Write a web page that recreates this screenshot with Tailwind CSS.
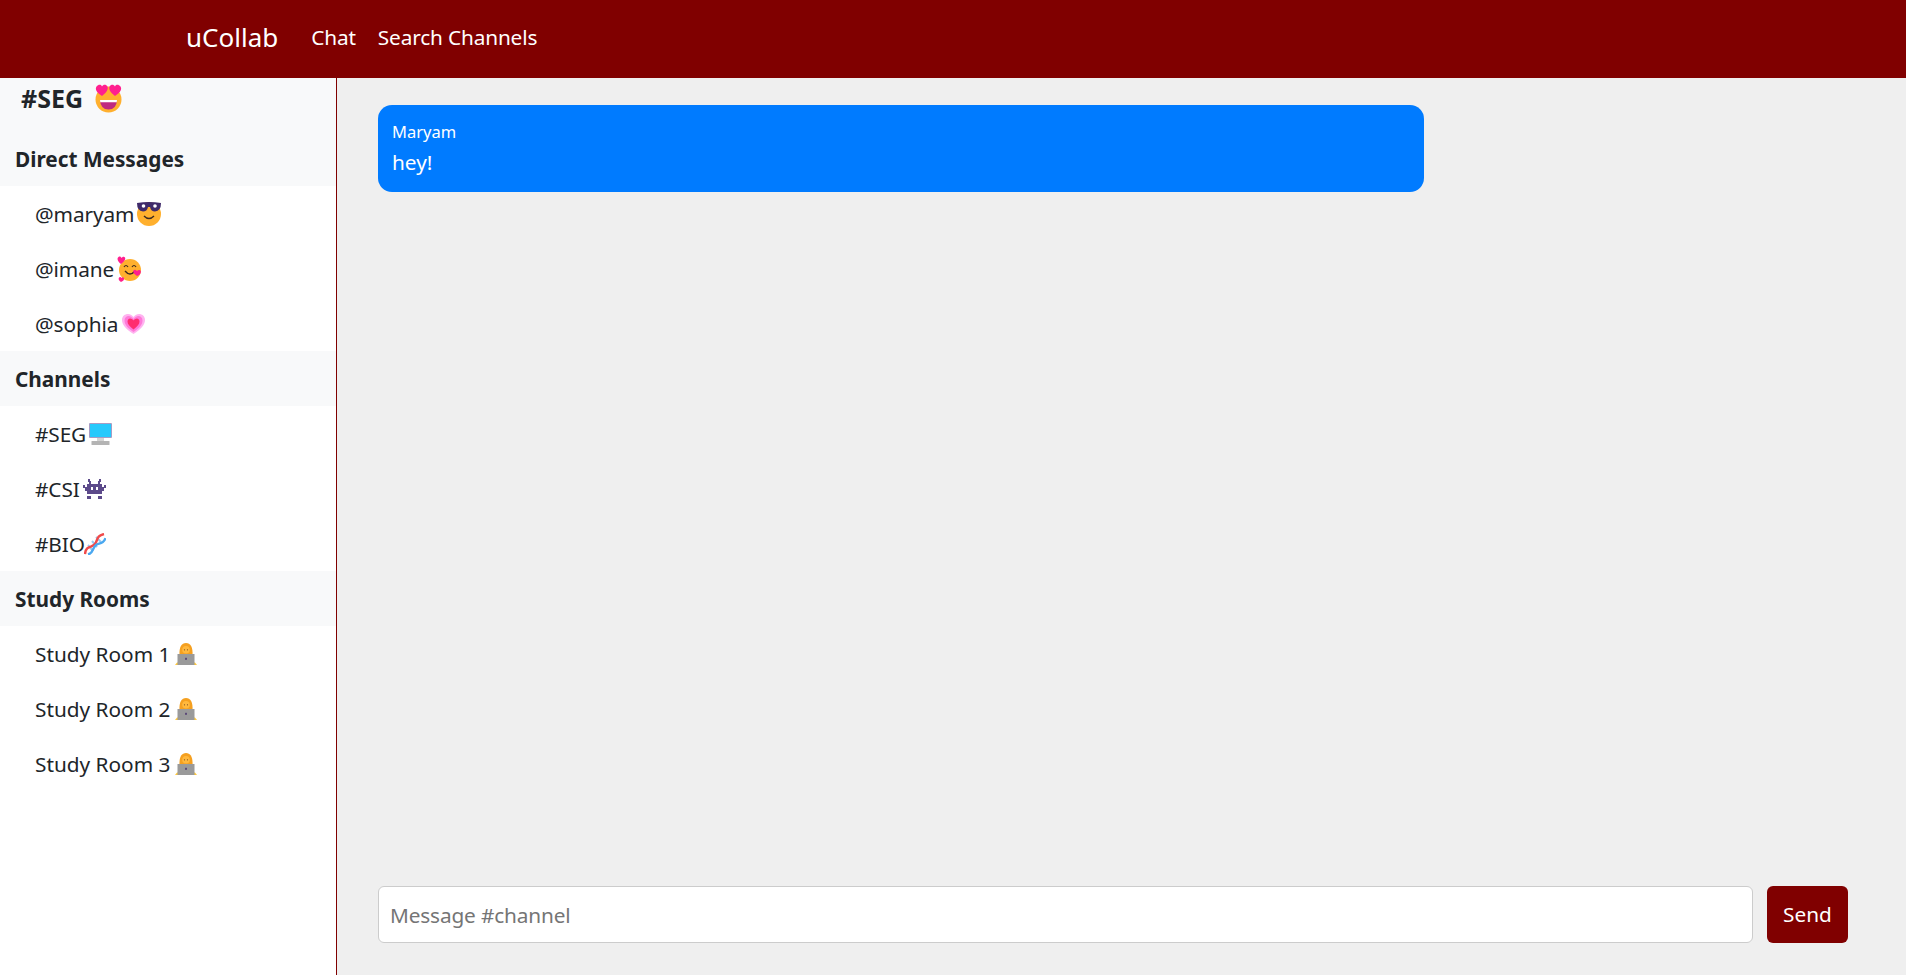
<!DOCTYPE html>
<html lang="en">
<head>
    <meta charset="UTF-8">
    <meta name="viewport" content="width=device-width, initial-scale=1.0">
    <title>uCollab</title>
    <script src="https://cdn.jsdelivr.net/npm/@tailwindcss/browser@4"></script>
</head>
<body class="h-[975px] overflow-hidden bg-[#efefef] text-[#212529] font-['Noto_Sans','Open_Sans',sans-serif]">

    <!-- Shared emoji drawings -->
    <svg class="hidden">
        <symbol id="woman-laptop" viewBox="0 0 22 22">
            <path d="M4.500 12 C4 4 6.500 0 11 0 C15.500 0 18 4 17.500 12 Z" fill="#f5a020"/>
            <circle cx="11" cy="6.800" r="3.800" fill="#ffb83d"/>
            <circle cx="9.500" cy="6.800" r=".6" fill="#7a4a20"/>
            <circle cx="12.500" cy="6.800" r=".6" fill="#7a4a20"/>
            <path d="M0 22 L2 19.500 H3 V22 Z M22 22 L20 19.500 H19 V22 Z" fill="#ffc83d"/>
            <rect x="2.500" y="11" width="17" height="11" fill="#9a9a9a"/>
            <rect x="10" y="14.800" width="2" height="2" fill="#5c4a78"/>
        </symbol>
    </svg>

    <!-- Navigation Bar -->
    <header class="h-[78px] bg-[#800000] text-white flex items-center pl-[186px] pb-[4px]">
        <a href="#" class="text-[26px] leading-none mr-[33px]">uCollab</a>
        <nav class="flex items-center gap-[22px] text-[20.8px] leading-none tracking-[-0.15px]">
            <a href="#">Chat</a>
            <a href="#">Search Channels</a>
        </nav>
    </header>

    <div class="flex h-[897px]">
        <!-- Sidebar -->
        <aside class="w-[337px] shrink-0 bg-white border-r border-[#800000]">
            <div class="bg-[#f8f9fa] h-[53px]">
                <div class="flex items-center h-[41px] pl-[21px] text-[25px] font-bold">
                    #SEG
                    <svg class="ml-[12px] -mt-[1px] w-[27px] h-[29px]" viewBox="0 0 27 29">
                        <circle cx="13.500" cy="15.500" r="13" fill="#ffb02e"/>
                        <path d="M5 16 H22 Q21.500 25.500 13.500 25.500 Q5.500 25.500 5 16 Z" fill="#bf2a80"/>
                        <path d="M5 16 H22 L21.700 18.200 H5.300 Z" fill="#fff"/>
                        <path d="M7 12 C1 8 0 5 1.500 2.500 C3.500 0 6.500 .5 7 2.500 C8 .5 11 0 12.500 2.500 C13.500 5 12 8 7 12 Z" fill="#ff1f8f"/>
                        <path d="M20 12 C15 8 13.500 5 14.500 2.500 C16 0 19 .5 20 2.500 C20.500 .5 23.500 0 25.500 2.500 C27 5 26 8 20 12 Z" fill="#ff1f8f"/>
                    </svg>
                </div>
            </div>
            <h2 class="flex items-center h-[55px] pl-[15px] pt-[2px] bg-[#f8f9fa] text-[20.8px] font-bold">Direct Messages</h2>

            <ul class="rounded-[5px] bg-white">
                <li class="flex items-center h-[55px] pl-[35px] pt-[2px] text-[20.8px] tracking-[-0.1px]">
                    @maryam
                    <svg class="ml-[3px] -mt-[3px] w-[24px] h-[25px]" viewBox="0 0 24 25">
                        <circle cx="12" cy="13" r="12" fill="#ffb02e"/>
                        <path d="M0 2 Q12 0 24 2 Q24 10 18 10.500 Q14 10.500 13 6 H11 Q10 10.500 6 10.500 Q0 10 0 2 Z" fill="#3f2a6a"/>
                        <circle cx="6.500" cy="5" r="1.800" fill="#fff"/>
                        <circle cx="18" cy="5" r="1.800" fill="#fff"/>
                        <path d="M7 15 Q12 20 17 15" fill="none" stroke="#3c2a20" stroke-width="1.400"/>
                    </svg>
                </li>
                <li class="flex items-center h-[55px] pl-[35px] pt-[2px] text-[20.8px] tracking-[-0.1px]">
                    @imane
                    <svg class="ml-[3px] -mt-[2px] w-[24px] h-[26px]" viewBox="0 0 24 26">
                        <circle cx="13" cy="14" r="11" fill="#ffb02e"/>
                        <path d="M7 11 Q9 8 11 11 M15 11 Q17 8 19 11" fill="none" stroke="#3c2a20" stroke-width="1.200"/>
                        <path d="M8 15 Q13 21 18 15" fill="none" stroke="#3c2a20" stroke-width="1.300"/>
                        <path d="M4 8 C0 5 0 2 1.500 1 C3 0 4 1 4.500 2 C5 1 7 0 8 1.500 C9 3 7 6 4 8 Z" fill="#ff1f8f"/>
                        <path d="M20 20 C17 18 15.500 16 16.500 14.500 C17.500 13 19 14 20 15 C21 14 23 13.500 23.800 15 C24.200 17 23 19 20 20 Z" fill="#ff1f8f"/>
                        <path d="M4 26 C2 25 1 23 2 21.500 C3 20.500 4 21 4.500 22 C5 21 6.500 21 7 22 C7.500 24 6 25 4 26 Z" fill="#ff1f8f"/>
                    </svg>
                </li>
                <li class="flex items-center h-[55px] pl-[35px] pt-[2px] text-[20.8px] tracking-[-0.1px]">
                    @sophia
                    <svg class="ml-[4px] -mt-[1px] w-[23px] h-[20px]" viewBox="0 0 23 20">
                        <path d="M11.500 20 C4 15 0 11 0 6 C0 2 3 0 6 0 C8.500 0 10.500 1.500 11.500 3 C12.500 1.500 14.500 0 17 0 C20 0 23 2 23 6 C23 11 19 15 11.500 20 Z" fill="#ffb3f0"/>
                        <path d="M11.500 18 C5.500 14 2.500 10.500 2.500 6.500 C2.500 3.500 4.500 2 6.500 2 C8.500 2 10.500 3.500 11.500 5 C12.500 3.500 14.500 2 16.500 2 C18.500 2 20.500 3.500 20.500 6.500 C20.500 10.500 17.500 14 11.500 18 Z" fill="#ff7ad9"/>
                        <path d="M11.500 15.500 C7.500 12.500 5.500 10 5.500 7.500 C5.500 5.500 7 4.500 8 4.500 C9.500 4.500 11 5.500 11.500 6.500 C12 5.500 13.500 4.500 15 4.500 C16 4.500 17.500 5.500 17.500 7.500 C17.500 10 15.500 12.500 11.500 15.500 Z" fill="#ff2d6e"/>
                    </svg>
                </li>
            </ul>

            <h2 class="flex items-center h-[55px] pl-[15px] pt-[2px] bg-[#f8f9fa] text-[20.8px] font-bold">Channels</h2>

            <ul class="rounded-[5px] bg-white">
                <li class="flex items-center h-[55px] pl-[35px] pt-[2px] text-[20.8px] tracking-[-0.1px]">
                    #SEG
                    <svg class="ml-[3px] -mt-[1px] w-[23px] h-[22px]" viewBox="0 0 23 22">
                        <rect x="0" y="0" width="23" height="15" rx="1" fill="#a79cc4"/>
                        <rect x="1" y="1" width="21" height="13" fill="#26c9fc"/>
                        <rect x="8" y="15" width="7" height="3" fill="#d3d3d3"/>
                        <rect x="2.500" y="18" width="18" height="4" rx=".5" fill="#b4b4b4"/>
                    </svg>
                </li>
                <li class="flex items-center h-[55px] pl-[35px] pt-[2px] text-[20.8px] tracking-[-0.1px]">
                    #CSI
                    <svg class="ml-[3px] -mt-[1px] w-[23px] h-[20px]" viewBox="0 0 23 20">
                        <path d="M5 0 H7 V2 H8 V5 H15 V2 H16 V0 H18 V3 H17 V5 H19 V8 H21 V6 H23 V9 H21 V12 H19 V15 H4 V12 H2 V9 H0 V6 H2 V8 H4 V5 H6 V3 H5 Z" fill="#5c4a8a"/>
                        <rect x="4" y="17" width="4" height="3" fill="#5c4a8a"/>
                        <rect x="15" y="17" width="4" height="3" fill="#5c4a8a"/>
                        <rect x="8" y="8" width="2" height="3" fill="#fff"/>
                        <rect x="13" y="8" width="2" height="3" fill="#fff"/>
                    </svg>
                </li>
                <li class="flex items-center h-[55px] pl-[35px] pt-[2px] text-[20.8px] tracking-[-0.1px]">
                    #BIO
                    <svg class="-ml-[1px] -mt-[1px] w-[22px] h-[22px]" viewBox="0 0 22 22">
                        <path d="M4 12 L9 18 M8 8 L13 14 M12 4 L17 9" stroke="#9cc8f0" stroke-width="2"/>
                        <path d="M1 21 C2 12 8 15 11 11 C14 7 12 3 20 1" fill="none" stroke="#f04a4a" stroke-width="2.400"/>
                        <path d="M4 21.500 C10 20 8 15 12 12 C15 10 20 11 21.500 5" fill="none" stroke="#4aa8f0" stroke-width="2.400"/>
                    </svg>
                </li>
            </ul>

            <h2 class="flex items-center h-[55px] pl-[15px] pt-[2px] bg-[#f8f9fa] text-[20.8px] font-bold">Study Rooms</h2>

            <ul class="rounded-[5px] bg-white">
                <li class="flex items-center h-[55px] pl-[35px] pt-[2px] text-[20.8px]">
                    Study Room 1
                    <svg class="ml-[5px] -mt-[1px] w-[22px] h-[22px]"><use href="#woman-laptop"/></svg>
                </li>
                <li class="flex items-center h-[55px] pl-[35px] pt-[2px] text-[20.8px]">
                    Study Room 2
                    <svg class="ml-[5px] -mt-[1px] w-[22px] h-[22px]"><use href="#woman-laptop"/></svg>
                </li>
                <li class="flex items-center h-[55px] pl-[35px] pt-[2px] text-[20.8px]">
                    Study Room 3
                    <svg class="ml-[5px] -mt-[1px] w-[22px] h-[22px]"><use href="#woman-laptop"/></svg>
                </li>
            </ul>
        </aside>

        <!-- Chat -->
        <main class="flex-1 flex flex-col pl-[41px] pr-[58px] pt-[27px] pb-[32px]">
            <div class="flex-1">
                <div class="w-[1046px] h-[87px] rounded-[14px] bg-[#007bff] text-white px-[14px] pt-[15px]">
                    <div class="text-[16.5px] leading-[24px]">Maryam</div>
                    <div class="mt-[3px] text-[20.8px] leading-[31px]">hey!</div>
                </div>
            </div>
            <form class="flex gap-[14px] h-[57px]">
                <input type="text" placeholder="Message #channel" class="flex-1 h-full px-[11px] bg-white border border-[#cccccc] rounded-[6px] text-[20.8px] tracking-[-0.15px] placeholder:text-[#757575]">
                <button type="button" class="w-[81px] h-full rounded-[6px] bg-[#800000] text-white text-[20.8px]">Send</button>
            </form>
        </main>
    </div>

</body>
</html>
